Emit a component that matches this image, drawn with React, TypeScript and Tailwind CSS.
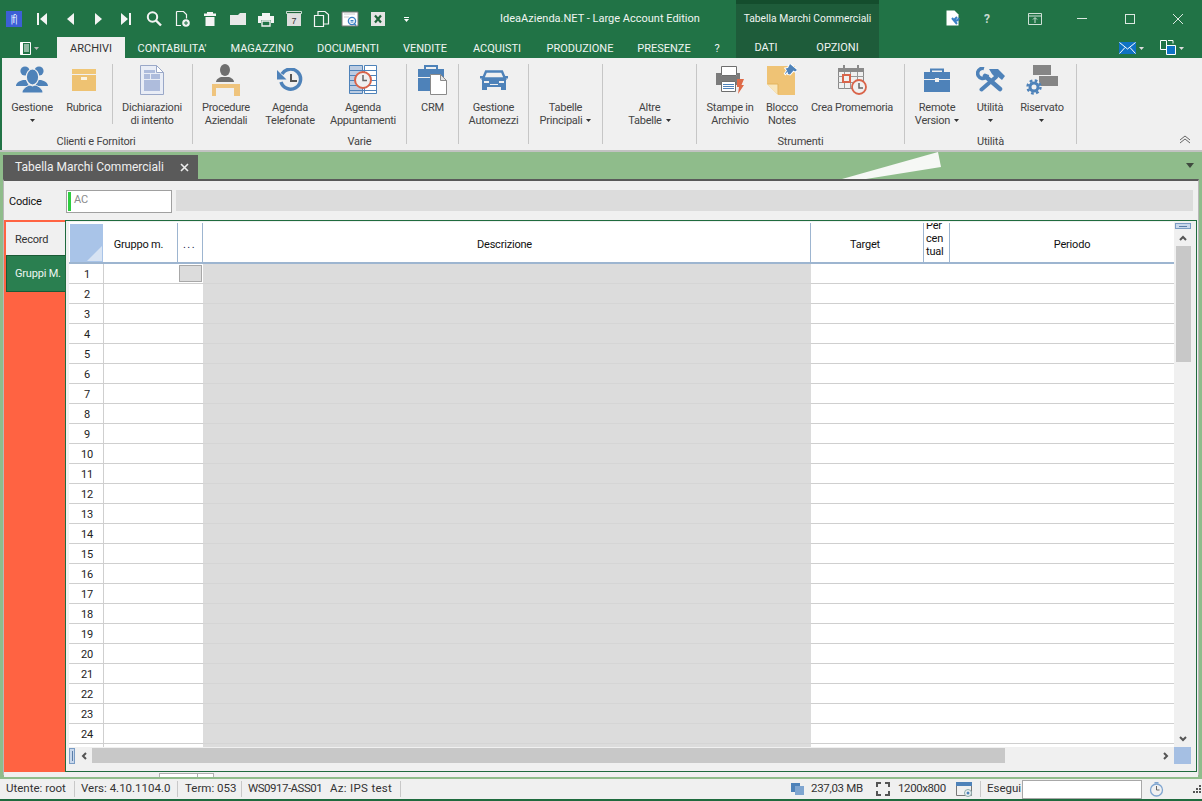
import React from "react";

const W = "#f4f4f4";
const B = "#4e82b9";

const s = (w: number, h: number, children: React.ReactNode) => (
  <svg width={w} height={h} viewBox={`0 0 ${w} ${h}`} className="block shrink-0">{children}</svg>
);

const toolbar: React.ReactNode[] = [
  s(18, 16, <><path d="M4 2h2v12H4zM14 2v12L7 8z" fill={W} /></>),
  s(18, 16, <path d="M13 2v12L6 8z" fill={W} />),
  s(18, 16, <path d="M6 2v12l7-6z" fill={W} />),
  s(18, 16, <path d="M4 2v12l7-6zM12 2h2v12h-2z" fill={W} />),
  s(18, 18, <><circle cx="7.5" cy="7" r="4.7" fill="none" stroke={W} strokeWidth="2" /><path d="M11 10.5l5 5" stroke={W} strokeWidth="2.4" /></>),
  s(18, 18, <><path d="M3.5 1.5h7l3 3v4M8 15.5H3.5v-14" fill="none" stroke={W} strokeWidth="1.2" /><circle cx="13" cy="13" r="3.8" fill={W} /><path d="M11 13h4M13 11v4" stroke="#217346" /></>),
  s(18, 18, <><path d="M6 2h6v1.5h3V6H3V3.5h3z" fill={W} /><path d="M4.5 7h9v9h-9z" fill={W} /></>),
  s(18, 16, <path d="M1 4h8l2-2h6v12H1z" fill="#e8e8e8" />),
  s(18, 16, <><path d="M5 2h8v4H5zM1 5h16v7h-3V9H4v3H1z" fill={W} /><path d="M5 10h8v5H5z" fill="none" stroke={W} strokeWidth="1.3" /></>),
  s(18, 18, <><path d="M2 2h14v14H2z" fill="#dedede" /><path d="M2 2h14v2H2z" fill="#1d6339" /><path d="M1.5 1.5h15v2h-15z" fill="none" stroke={W} strokeWidth="0.8" /><text x="9" y="13.5" textAnchor="middle" fontSize="9" fill="#333" fontFamily="Liberation Sans">7</text></>),
  s(18, 18, <><path d="M1.5 5.5h9v11h-9z" fill="none" stroke={W} strokeWidth="1.2" /><path d="M5 5V1.5h7l3.5 3v9.5H11" fill="none" stroke={W} strokeWidth="1.2" /></>),
  s(18, 18, <><path d="M1 2h16v14H1z" fill="#fff" stroke="#777" /><path d="M3 4h11M3 7h5" stroke="#ccc" /><circle cx="11" cy="11" r="3.6" fill="#fff" stroke="#3a80c4" strokeWidth="1.4" /><path d="M9.5 10.5h3M9.5 12h3" stroke="#3a80c4" /><path d="M13 13.5l2 2" stroke="#3a80c4" strokeWidth="1.4" /></>),
  s(18, 18, <><path d="M2 2h14v14H2z" fill="#e4e4e4" /><path d="M6 5.5l6 7M12 5.5l-6 7" stroke="#1d6339" strokeWidth="2.2" /></>),
];

const People = () => s(32, 27, <g fill={B}>
  <circle cx="9" cy="5" r="4.6" /><circle cx="23" cy="5" r="4.6" />
  <path d="M0 20c0-3 3-5 7-6h3l3 6zM32 20c0-3-3-5-7-6h-3l-3 6z" />
  <ellipse cx="16.500" cy="11" rx="6.200" ry="8" stroke="#f0f0f0" strokeWidth="1.200" />
  <path d="M6 27c0-4 4-7 8-8l2.500 1 2.500-1c4 1 8 4 8 8z" stroke="#f0f0f0" strokeWidth="1" />
</g>);

const Box = () => s(24, 22, <g>
  <path d="M0 0h24v5H0z" fill="#f0c676" /><path d="M0 6h24v16H0z" fill="#eec272" /><path d="M9 8h6v3H9z" fill="#fbf3e0" />
</g>);

const DocForm = () => s(24, 30, <g>
  <path d="M.5.5h16l7 7v22H.5z" fill="#e9edf6" stroke="#9aa8c8" />
  <path d="M16.500.5v7h7z" fill="#fff" stroke="#9aa8c8" />
  <path d="M4 5h11v3H4zM4 9h6v5H4zM11 9h9v5h-9zM4 15h16v11H4z" fill="#aebcdc" />
</g>);

const Procedure = () => s(28, 32, <g>
  <ellipse cx="13" cy="6" rx="5" ry="6" fill="#6e6e6e" /><path d="M4 18c0-3 4-5 6-5h6c2 0 6 2 6 5z" fill="#6e6e6e" />
  <path d="M0 20h28v12h-6v-8H4v8H0z" fill="#efc47d" />
</g>);

const History = () => s(26, 24, <g>
  <path d="M5 6A10 10 0 1 1 4 14" fill="none" stroke={B} strokeWidth="3.500" />
  <path d="M0 2v9.500h9.500z" fill={B} />
  <path d="M14 6v7h6" fill="none" stroke="#555" strokeWidth="2" />
</g>);

const Appt = () => s(28, 29, <g>
  <path d="M.5.5h13v28H.5z" fill="#bccce2" stroke={B} />
  <path d="M15.500.5h12v28h-12z" fill="#fff" stroke={B} />
  <path d="M0 5.500h28M0 10.500h28M0 15.500h28M0 20.500h28M0 25.500h28" stroke={B} />
  <circle cx="14" cy="15" r="8" fill="#f0f0f0" stroke="#d9644a" strokeWidth="2" />
  <path d="M14 10v5.500h4" fill="none" stroke="#666" strokeWidth="1.500" />
</g>);

const Crm = () => s(29, 30, <g>
  <path d="M7 4V1h12v3" fill="none" stroke={B} strokeWidth="2" />
  <path d="M0 4h26v8H0zM0 13h26v13H0z" fill={B} />
  <path d="M12.500 9.500h10l6 6v14h-16z" fill="#fff" stroke="#8a8a8a" />
  <path d="M22.500 9.500v6h6z" fill="#e4e4e4" stroke="#8a8a8a" />
</g>);

const Car = () => s(28, 20, <g fill={B}>
  <path d="M6 1.500h16l3 7H3z" fill="none" stroke={B} strokeWidth="2.400" />
  <path d="M0 6h4v2.500H0zM24 6h4v2.500h-4z" />
  <path d="M2 8h24v9H2z" /><path d="M2 17h5v3H2zM21 17h5v3h-5z" />
  <path d="M4 11h5v2H4zM19 11h5v2h-5zM10 14h8v1h-8z" fill="#f0f0f0" />
</g>);

const Printer = () => s(28, 28, <g>
  <path d="M5.500.5h15v9h-15z" fill="#fff" stroke="#6e6e6e" />
  <path d="M0 7h5v3h16V7h3v12H0z" fill="#7b7b7b" />
  <path d="M5.500 15.500h14v10h-14z" fill="#fff" stroke="#6e6e6e" />
  <path d="M7 18.500h11M7 20.500h11M7 22.500h11" stroke={B} />
  <path d="M21 13h7l-2.500 6H28l-6 9 1-7h-2z" fill="#de6a48" />
</g>);

const Notes = () => s(30, 31, <g>
  <path d="M0 2h28v29H11L0 20z" fill="#efc375" />
  <path d="M0 20h11v11z" fill="#f8e6bc" />
  <path d="M.5 20h10.500v10" fill="none" stroke="#e3b35d" />
  <path d="M23 0l7 6-2 1.500-1.500-1-3.500 4-2-.5-.5-2.500-2 2.500-.5-.5 2-3-1.500-2 2.500-.5z" fill={B} stroke="#fff" strokeWidth="2" paintOrder="stroke" />
</g>);

const Cal = () => s(29, 30, <g>
  <path d="M.5 3.500h25v20H.5z" fill="#f0f0f0" stroke="#8a8a8a" />
  <path d="M0 3h26v4H0z" fill="#8a8a8a" />
  <path d="M6 0v5M20 0v5" stroke="#8a8a8a" strokeWidth="2" />
  <path d="M0 11.500h26M0 17.500h26M6.500 7v17M12.500 7v17M19.500 7v17" stroke="#999" />
  <path d="M5 10h7v7H5z" fill="#f0f0f0" stroke="#d9644a" strokeWidth="2" />
  <circle cx="21" cy="22" r="7" fill="#f0f0f0" stroke="#d9644a" strokeWidth="1.800" />
  <path d="M21 18v5h4" fill="none" stroke="#666" strokeWidth="1.500" />
</g>);

const Brief = () => s(26, 24, <g>
  <path d="M7 5V1.500h12V5" fill="none" stroke={B} strokeWidth="2" />
  <path d="M0 4h26v7H15v-1h-4v1H0zM0 12h11v2h4v-2h11v12H0z" fill={B} />
</g>);

const Tools = () => s(29, 25, <g fill={B}>
  <path d="M20 10L5.500 22.500" stroke={B} strokeWidth="4" strokeLinecap="round" fill="none" />
  <path d="M9 9l15 13" stroke={B} strokeWidth="4.500" strokeLinecap="round" fill="none" />
  <path d="M8 1.500A5 5 0 1 0 11.500 7.500" fill="none" stroke={B} strokeWidth="3.600" />
  <path d="M13 2h9l7 7-3 4-5-4-2 1-3-3z" />
</g>);

const Reserved = () => s(32, 30, <g>
  <path d="M7 0h18v10H7zM13 11h19v10H13z" fill="#858585" />
  <path d="M12 10h13v1H12z" fill="#f0f0f0" />
  <circle cx="8" cy="22" r="7" fill="#f0f0f0" />
  <circle cx="8" cy="22" r="4" fill="none" stroke={B} strokeWidth="3" />
  <circle cx="8" cy="22" r="6.500" fill="none" stroke={B} strokeWidth="2.400" strokeDasharray="2.700 2.400" />
</g>);

const Caret = ({ c = "#333" }: { c?: string }) => (
  <svg width="5" height="3" viewBox="0 0 5 3" className="inline-block shrink-0"><path d="M0 0h5L2.500 3z" fill={c} /></svg>
);

type Item = { w: number; icon?: React.ReactNode; lines: React.ReactNode[]; caretLine?: boolean };

const RibbonItem = ({ w, icon, lines, caretLine }: Item) => (
  <div className="flex flex-col items-center shrink-0" style={{ width: w }}>
    <div className="h-[31px] flex items-center justify-center">{icon}</div>
    <div className="flex flex-col items-center text-[11px] leading-[13px] tracking-[-0.25px] text-[#444] whitespace-nowrap mt-[6px]">
      {lines.map((l, i) => <span key={i} className="flex items-center gap-[4px] h-[13px]">{l}</span>)}
      {caretLine && <span className="h-[13px] flex items-center"><Caret /></span>}
    </div>
  </div>
);

const Group = ({ w, label, labelClass, children }: { w: number; label?: string; labelClass?: string; children: React.ReactNode }) => (
  <div className="shrink-0 flex flex-col border-r border-[#c6c6c6] mb-[6px]" style={{ width: w }}>
    <div className="flex h-[71px] shrink-0">{children}</div>
    <div className={"h-[9px] shrink-0 text-[11px] leading-[13px] tracking-[-0.2px] text-[#444] text-center whitespace-nowrap " + (labelClass ?? "")}>{label}</div>
  </div>
);

const Sep = () => <div className="w-px h-[60px] bg-[#c6c6c6] shrink-0" />;

const rows = Array.from({ length: 25 }, (_, i) => i + 1);

export default function App() {
  return (
    <div className="w-[1202px] h-[801px] overflow-hidden flex flex-col bg-[#8fbc8b] relative" style={{ fontFamily: 'Roboto, sans-serif' }}>
      {/* Header */}
      <div className="flex h-[58px] bg-[#217346] text-[#f0f5f2] shrink-0">
        <div className="w-[736px] flex flex-col shrink-0">
          <div className="h-[37px] flex items-center pt-[1px]">
            <div className="w-[28px] flex justify-center">
              <div className="w-[16px] h-[16px] bg-[#3d5fd6] flex items-center justify-center text-[#dfe6ff] text-[11px] leading-none tracking-[-1px] ml-[-1px]">|f|</div>
            </div>
            {toolbar.map((ic, i) => <div key={i} className="w-[28px] h-[20px] flex items-center justify-center shrink-0">{ic}</div>)}
            <div className="w-[28px] flex flex-col items-center gap-[1px]">
              <div className="w-[5px] h-px bg-white" />
              <Caret c="#fff" />
            </div>
            <div className="text-[11px] ml-[80px] whitespace-nowrap w-[200px] text-center">IdeaAzienda.NET - Large Account Edition</div>
          </div>
          <div className="h-[21px] flex items-stretch text-[11px] shrink-0">
            <div className="w-[57px] flex items-center pl-[19px] gap-[2px] shrink-0 pt-[1px]">
              <svg width="13" height="13" viewBox="0 0 13 13" className="block"><path d="M1.500.5h10v12h-10z" fill="#217346" stroke="#fff" /><path d="M1 .5h3v12H1z" fill="#fff" /><path d="M5 3h5M5 5h5M5 7h5M5 9h5" stroke="#fff" /></svg>
              <Caret c="#bbb" />
            </div>
            <div className="w-[68px] bg-[#f0f0f0] text-[#333] flex items-center justify-center pt-[4px]">ARCHIVI</div>
            {[["CONTABILITA'", 94], ["MAGAZZINO", 86], ["DOCUMENTI", 86], ["VENDITE", 68], ["ACQUISTI", 76], ["PRODUZIONE", 90], ["PRESENZE", 78], ["?", 28]].map(([t, w]) => (
              <div key={t as string} className="flex items-center justify-center shrink-0 pt-[4px]" style={{ width: w as number }}>{t}</div>
            ))}
          </div>
        </div>
        <div className="w-[143px] shrink-0 flex flex-col bg-[#1e5c3a] border-t-[4px] border-[#144d2d]">
          <div className="h-[29px] flex items-center justify-center text-[10.300px] whitespace-nowrap">Tabella Marchi Commerciali</div>
          <div className="h-[25px] flex items-center text-[11px] pt-[6px]">
            <div className="w-[60px] text-center">DATI</div>
            <div className="w-[83px] text-center">OPZIONI</div>
          </div>
        </div>
        <div className="flex-1 flex flex-col">
          <div className="h-[37px] flex items-center pl-[65px]">
            <div className="w-[18px] flex justify-center">
              <svg width="14" height="17" viewBox="0 0 14 17" className="block"><path d="M.5.5h8l4 4v11H.5z" fill="#fff" /><path d="M6 8l5 6M11 7l-2 2 1 2 2-1 1-2" stroke="#3a80c4" strokeWidth="2" fill="none" /></svg>
            </div>
            <div className="w-[50px] text-center text-[12px] font-bold text-[#c8d9cf]">?</div>
            <div className="w-[46px] flex justify-center">
              <svg width="14" height="12" viewBox="0 0 14 12" className="block"><path d="M.5.5h13v11H.5zM0 3h14M7 10V5M5 6.500L7 4.500l2 2" fill="none" stroke="#cfe0d6" /></svg>
            </div>
            <div className="w-[48px] flex justify-center"><div className="w-[10px] h-px bg-[#dce8e1]" /></div>
            <div className="w-[48px] flex justify-center"><div className="w-[10px] h-[10px] border border-[#dce8e1]" /></div>
            <div className="w-[48px] flex justify-center">
              <svg width="10" height="10" viewBox="0 0 10 10" className="block"><path d="M0 0l10 10M10 0L0 10" stroke="#dce8e1" /></svg>
            </div>
          </div>
          <div className="h-[21px] flex items-center pl-[240px]">
            <svg width="17" height="12" viewBox="0 0 17 12" className="block"><path d="M0 0h17v12H0z" fill="#0f72c4" /><path d="M.5.5L8.500 7l8-6.500M.5 11.500l5.500-6M16.500 11.500l-5.500-6" fill="none" stroke="#fff" /></svg>
            <div className="ml-[3px] mr-[16px]"><Caret c="#ddd" /></div>
            <svg width="16" height="15" viewBox="0 0 16 15" className="block"><path d="M.5.5h6v9h-6z" fill="#217346" stroke="#fff" /><path d="M6.500 5.500h9v9h-9z" fill="#0f72c4" stroke="#fff" /><path d="M8 .5h5v3" fill="none" stroke="#fff" /></svg>
            <div className="ml-[3px]"><Caret c="#ddd" /></div>
          </div>
        </div>
      </div>

      {/* Ribbon */}
      <div className="h-[92px] bg-[#f0f0f0] flex pt-[6px] pl-[2px] shrink-0 border-l-2 border-[#217346] relative">
        <Group w={189} label="Clienti e Fornitori" labelClass="pr-[4px]">
          <RibbonItem w={56} icon={<People />} lines={["Gestione"]} caretLine />
          <RibbonItem w={48} icon={<Box />} lines={["Rubrica"]} />
          <div className="w-[4px] shrink-0" />
          <Sep />
          <RibbonItem w={78} icon={<DocForm />} lines={["Dichiarazioni", "di intento"]} />
        </Group>
        <Group w={214} label="Varie" labelClass="pl-[120px]">
          <RibbonItem w={66} icon={<Procedure />} lines={["Procedure", "Aziendali"]} />
          <RibbonItem w={62} icon={<History />} lines={["Agenda", "Telefonate"]} />
          <RibbonItem w={84} icon={<Appt />} lines={["Agenda", "Appuntamenti"]} />
        </Group>
        <Group w={52}>
          <RibbonItem w={51} icon={<Crm />} lines={["CRM"]} />
        </Group>
        <Group w={70}>
          <RibbonItem w={69} icon={<Car />} lines={["Gestione", "Automezzi"]} />
        </Group>
        <Group w={74}>
          <RibbonItem w={73} lines={["Tabelle", <>Principali <Caret /></>]} />
        </Group>
        <Group w={94}>
          <RibbonItem w={93} lines={["Altre", <>Tabelle <Caret /></>]} />
        </Group>
        <Group w={208} label="Strumenti">
          <RibbonItem w={66} icon={<Printer />} lines={["Stampe in", "Archivio"]} />
          <RibbonItem w={38} icon={<Notes />} lines={["Blocco", "Notes"]} />
          <RibbonItem w={102} icon={<Cal />} lines={["Crea Promemoria"]} />
        </Group>
        <Group w={172} label="Utilità">
          <RibbonItem w={64} icon={<Brief />} lines={["Remote", <>Version <Caret /></>]} />
          <RibbonItem w={42} icon={<Tools />} lines={["Utilità"]} caretLine />
          <RibbonItem w={62} icon={<Reserved />} lines={["Riservato"]} caretLine />
        </Group>
        <svg width="12" height="9" viewBox="0 0 12 9" className="absolute right-[11px] bottom-[6px]"><path d="M1 5l5-4 5 4M1 8l5-4 5 4" fill="none" stroke="#666" /></svg>
      </div>

      {/* Document band */}
      <div className="h-[2px] bg-[#c2c2c2] shrink-0" />
      <div className="h-[27px] shrink-0 relative pl-[3px] pt-[3px] flex items-start">
        <div className="w-[195px] h-[24px] bg-[#5a5a5a] text-[#f0f0f0] text-[12px] flex items-center pl-[12px] whitespace-nowrap">
          <span className="w-[165px]">Tabella Marchi Commerciali</span>
          <svg width="9" height="9" viewBox="0 0 9 9" className="block"><path d="M1 1l7 7M8 1L1 8" stroke="#eee" strokeWidth="1.600" /></svg>
        </div>
        <svg width="110" height="27" viewBox="0 0 110 27" className="absolute left-[838px] top-0"><path d="M4 27L100 0l3 15-75 12z" fill="#f6f8f5" /></svg>
        <div className="absolute right-[8px] top-[11px]"><svg width="8" height="5" viewBox="0 0 8 5" className="block"><path d="M0 0h8L4 5z" fill="#3f4a3f" /></svg></div>
      </div>

      {/* Main panel */}
      <div className="h-[596px] shrink-0 mx-[3px] flex flex-col bg-[#f0f0f0] border-t-2 border-[#5a5a5a] border-l border-l-[#b8b8b8] border-r border-r-[#b8b8b8]">
        <div className="h-[39px] flex items-center pl-[5px] pr-[5px] shrink-0 pt-[2px]">
          <span className="w-[57px] text-[11px] tracking-[-0.2px] text-[#111] mt-[1px]">Codice</span>
          <div className="w-[106px] h-[23px] bg-white border border-[#a0a0a0] flex items-start pl-[1px] pt-[1px] shrink-0">
            <div className="w-[3px] h-[19px] bg-[#2ecc40]" />
            <span className="text-[11px] leading-[14px] text-[#8a8a8a] ml-[3px] mt-[1px]">AC</span>
          </div>
          <div className="flex-1 h-[21px] bg-[#dcdcdc] ml-[4px] mb-[2px]" />
        </div>
        <div className="h-[552px] shrink-0 mr-[1px] flex">
          {/* left tabs */}
          <div className="w-[61px] shrink-0 bg-[#ff6342] pt-[2px] flex flex-col text-[11px] tracking-[-0.2px]">
            <div className="h-[33px] ml-[2px] bg-[#f0f0f0] text-[#333] flex items-center pl-[9px] pt-[4px]">Record</div>
            <div className="h-[37px] ml-[2px] bg-[#2a7f50] text-[#eef5f0] border border-[#1b5a36] border-r-0 flex items-center pl-[8px] pt-[2px] whitespace-nowrap">Gruppi M.</div>
          </div>
          {/* grid area */}
          <div className="flex-1 border border-[#1f6b3e] flex flex-col pt-px min-w-0">
            <div className="flex flex-1 min-h-0">
              <div className="w-[1105px] ml-[3px] shrink-0 bg-white flex flex-col overflow-hidden text-[11px] tracking-[-0.2px] text-[#111]">
                <div className="h-[42px] flex shrink-0 border-b-2 border-[#9db5d0] pt-[1px]">
                  <div className="w-[34px] shrink-0 bg-[#a9c4e8] relative border-r border-white ml-px mt-px">
                    <svg width="15" height="15" viewBox="0 0 15 15" className="absolute right-[1px] bottom-[1px]"><path d="M15 0v15H0z" fill="#d7e3f3" /></svg>
                  </div>
                  <div className="w-[74px] shrink-0 border-r border-[#9db5d0] flex items-center justify-center pr-[4px] pt-[5px]">Gruppo m.</div>
                  <div className="w-[25px] shrink-0 border-r border-[#9db5d0] flex items-center justify-center pt-[5px] pr-[1px] tracking-[1.5px] text-[#1a1a4a]">...</div>
                  <div className="w-[608px] shrink-0 border-r border-[#9db5d0] flex items-center justify-center pr-[4px] pt-[5px]">Descrizione</div>
                  <div className="w-[113px] shrink-0 border-r border-[#9db5d0] flex items-center justify-center pr-[4px] pt-[5px]">Target</div>
                  <div className="w-[26px] shrink-0 border-r border-[#9db5d0] flex items-center overflow-hidden pl-[2px] leading-[13px] pt-[4px]">
                    <div className="shrink-0">Per<br />cen<br />tual<br />e</div>
                  </div>
                  <div className="flex-1 flex items-center justify-center pl-[20px] pt-[5px]">Periodo</div>
                </div>
                {rows.map((n) => (
                  <div key={n} className="h-[20px] flex shrink-0 border-b border-[#cfcfcf]">
                    <div className="w-[35px] shrink-0 border-r border-[#cfcfcf] flex items-center justify-center text-[#222] pl-[2px] pt-[3px]">{n < 25 ? n : ""}</div>
                    <div className="w-[74px] shrink-0" />
                    <div className="w-[25px] shrink-0 relative">
                      {n === 1 && <div className="absolute left-[1px] top-[1px] w-[23px] h-[17px] bg-[#dcdcdc] border border-[#a8a8a8]" />}
                    </div>
                    <div className="w-[608px] h-[20px] shrink-0 bg-[#dcdcdc] border-b border-[#d5d5d5]" />
                  </div>
                ))}
              </div>
              {/* vertical scrollbar */}
              <div className="w-[16px] shrink-0 ml-px flex flex-col items-center">
                <div className="w-[16px] h-[6px] mt-[1px] bg-[#c9d8ec] border border-[#7a9cc4] flex items-center justify-center shrink-0"><div className="w-[8px] h-px bg-[#5a7ea8]" /></div>
                <div className="h-[17px] flex items-center justify-center shrink-0">
                  <svg width="8" height="6" viewBox="0 0 8 6" className="block"><path d="M1 5l3-3 3 3" fill="none" stroke="#555" strokeWidth="2" /></svg>
                </div>
                <div className="w-[15px] h-[116px] bg-[#c8c8c8] shrink-0" />
                <div className="flex-1" />
                <div className="h-[17px] flex items-center justify-center shrink-0">
                  <svg width="8" height="6" viewBox="0 0 8 6" className="block"><path d="M1 1l3 3 3-3" fill="none" stroke="#555" strokeWidth="2" /></svg>
                </div>
              </div>
            </div>
            {/* horizontal scrollbar */}
            <div className="h-[17px] shrink-0 flex items-center ml-[3px] mr-[5px]">
              <div className="w-[6px] h-[16px] bg-[#c9d8ec] border border-[#7a9cc4] flex justify-center items-center shrink-0"><div className="w-px h-[10px] bg-[#5a7ea8]" /></div>
              <div className="w-[17px] flex justify-center shrink-0">
                <svg width="6" height="8" viewBox="0 0 6 8" className="block"><path d="M5 1L2 4l3 3" fill="none" stroke="#555" strokeWidth="2" /></svg>
              </div>
              <div className="w-[913px] h-[15px] bg-[#c8c8c8] shrink-0" />
              <div className="flex-1 flex justify-end pr-[5px]">
                <svg width="6" height="8" viewBox="0 0 6 8" className="block"><path d="M1 1l3 3-3 3" fill="none" stroke="#555" strokeWidth="2" /></svg>
              </div>
              <div className="w-[17px] h-[17px] bg-[#a5bfe3] shrink-0" />
            </div>
            <div className="h-[7px] shrink-0" />
          </div>
        </div>
        <div className="flex-1 flex pl-[155px] bg-[#f0f0f0]">
          <div className="w-[39px] h-[4px] mt-[1px] bg-white border border-[#b0b0b0] border-b-0" />
          <div className="w-[16px] h-[4px] mt-[1px] bg-white border-r border-t border-[#b0b0b0]" />
        </div>
      </div>

      {/* Status bar */}
      <div className="mt-auto h-[22px] shrink-0 bg-[#f0f0f0] border-b-2 border-[#1f6b3e] flex items-center text-[11.500px] text-[#333] whitespace-nowrap pl-[1px] relative">
        <span className="w-[73px] pl-[5px] shrink-0">Utente: root</span>
        <i className="w-px h-[16px] bg-[#c8c8c8] shrink-0" />
        <span className="w-[102px] pl-[6px] shrink-0">Vers: 4.10.1104.0</span>
        <i className="w-px h-[16px] bg-[#c8c8c8] shrink-0" />
        <span className="w-[63px] pl-[7px] shrink-0">Term: 053</span>
        <i className="w-px h-[16px] bg-[#c8c8c8] shrink-0" />
        <span className="w-[88px] pl-[6px] shrink-0 tracking-[-0.5px]">WS0917-ASS01</span>
        <span className="w-[70px] shrink-0 tracking-[0.3px]">Az: IPS test</span>
        <i className="w-px h-[16px] bg-[#c8c8c8] shrink-0" />
        <div className="flex-1" />
        <svg width="13" height="12" viewBox="0 0 13 12" className="block shrink-0"><path d="M0 0h9v9H0z" fill="#4e82b9" /><path d="M4 3h9v9H4z" fill="#7fa5d0" /></svg>
        <span className="ml-[7px] w-[65px] shrink-0 tracking-[-0.3px]">237,03 MB</span>
        <svg width="14" height="14" viewBox="0 0 14 14" className="block shrink-0"><path d="M1 5V1h4M9 1h4v4M1 9v4h4M13 9v4H9" fill="none" stroke="#555" strokeWidth="2" /></svg>
        <span className="ml-[8px] w-[58px] shrink-0 tracking-[-0.4px]">1200x800</span>
        <svg width="17" height="15" viewBox="0 0 17 15" className="block shrink-0"><path d="M.5.5h15v13H.5z" fill="none" stroke="#777" /><path d="M0 0h16v4H0z" fill={B} /><circle cx="12" cy="11" r="3.500" fill="#f0f0f0" stroke="#8aa" /><circle cx="12" cy="11" r="1.500" fill={B} /></svg>
        <i className="w-px h-[16px] bg-[#c8c8c8] ml-[7px] shrink-0" />
        <span className="ml-[6px] w-[35px] shrink-0">Esegui</span>
        <div className="w-[120px] h-[19px] bg-white border border-[#a8a8a8] shrink-0" />
        <div className="w-[26px] flex justify-center ml-[1px] shrink-0">
          <svg width="15" height="15" viewBox="0 0 15 15" className="block"><circle cx="7.500" cy="8" r="6" fill="#f0f0f0" stroke="#7fa5d0" strokeWidth="1.300" /><path d="M7.500 4v4h3" fill="none" stroke="#666" /><path d="M5.500 0h4v1.500h-4z" fill="#7fa5d0" /></svg>
        </div>
        <svg width="10" height="10" viewBox="0 0 10 10" className="ml-[23px] block shrink-0"><path d="M7 1h2v2H7zM4 4h2v2H4zM7 4h2v2H7zM1 7h2v2H1zM4 7h2v2H4zM7 7h2v2H7z" fill="#555" /></svg>
      </div>
    </div>
  );
}
